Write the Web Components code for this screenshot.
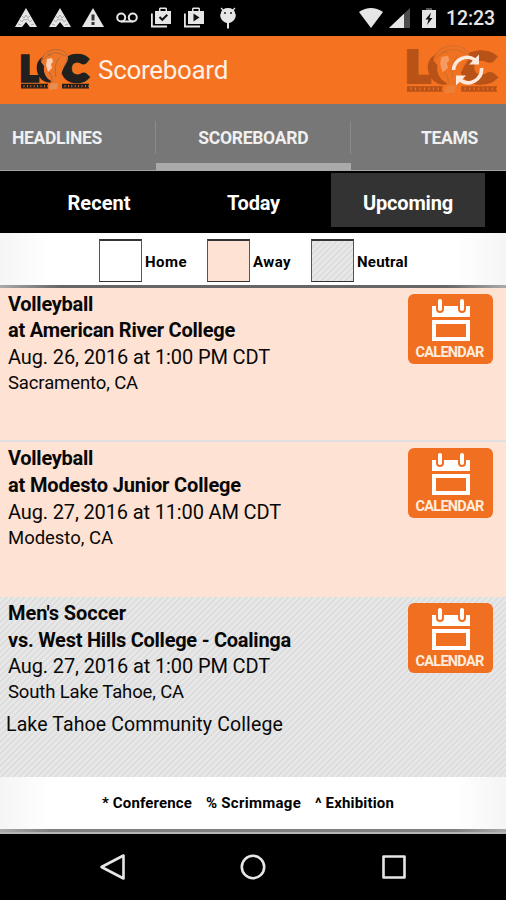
<!DOCTYPE html>
<html lang="en">
<head>
<meta charset="utf-8">
<title>Scoreboard</title>
<style>
html,body{margin:0;background:#000}
body{font-family:Roboto,"Liberation Sans",sans-serif;width:506px;height:900px;overflow:hidden}
</style>
</head>
<body>
<score-app></score-app>
<script>
const define = (name, html, init) => {
  const t = document.createElement('template');
  t.innerHTML = html;
  customElements.define(name, class extends HTMLElement {
    connectedCallback() {
      if (this.shadowRoot) return;
      this.attachShadow({mode: 'open'}).append(t.content.cloneNode(true));
      if (init) init(this, this.shadowRoot);
    }
  });
};

// A line of text tracked to a given width.
define('text-line', `<style>:host{display:block;white-space:nowrap;width:max-content}span{display:inline-block}</style><span><slot></slot></span>`, (el, root) => {
  const span = root.querySelector('span');
  const want = +el.getAttribute('width'), n = el.textContent.length;
  const have = span.getBoundingClientRect().width;
  if (want && have) span.style.letterSpacing = ((want - have) / n) + 'px';
});

define('status-bar', `<style>
:host{display:flex;align-items:center;height:36px;background:#000;color:#e6e6e6;box-sizing:border-box;padding:0 11px 0 15px}
svg{display:block;width:22px;height:22px;fill:currentColor}
.left{display:flex;gap:11.7px;flex:1}
.right{display:flex;align-items:center}
text-line{font-size:19.500px;font-weight:500;line-height:22px;padding-top:2px}
</style>
<div class="left">
<svg viewBox="0 0 22 22"><path d="M11 1L22 20h-7l-4-5-4 5H0z"/><path d="M7 9l2 2 2-3 2 3 2-2M5 13l2 2 2-3 2 1 2-1 2 3 2-2M3 17l3 1m10 0 3-1" fill="none" stroke="#aaa" stroke-width="1"/></svg>
<svg viewBox="0 0 22 22"><path d="M11 1L22 20h-7l-4-5-4 5H0z"/><path d="M7 9l2 2 2-3 2 3 2-2M5 13l2 2 2-3 2 1 2-1 2 3 2-2M3 17l3 1m10 0 3-1" fill="none" stroke="#aaa" stroke-width="1"/></svg>
<svg viewBox="0 0 22 22"><path d="M11 1L22 20H0z"/><path d="M9.500 7.500h3v6h-3zM9.500 15h3v3h-3z" fill="#333"/></svg>
<svg viewBox="0 0 22 22"><g fill="none" stroke="currentColor" stroke-width="2"><circle cx="5.2" cy="10.5" r="4"/><circle cx="16.8" cy="10.5" r="4"/><path d="M5 14.5h12"/></g></svg>
<svg viewBox="0 0 22 22"><path d="M1 6.500h1.800V18.500H17v2H1z"/><path d="M5 4h4V1.500l1-1h6l1 1V4h4v13H5zM10.500 4h5V2h-5z" fill-rule="evenodd"/><path d="M9.500 10l2.800 2.800 5-5" fill="none" stroke="#111" stroke-width="2"/></svg>
<svg viewBox="0 0 22 22"><path d="M1 6.500h1.800V18.500H17v2H1z"/><path d="M5 4h4V1.500l1-1h6l1 1V4h4v13H5zM10.500 4h5V2h-5z" fill-rule="evenodd"/><path d="M10.500 6.500l6 4-6 4z" fill="#111"/></svg>
<svg viewBox="0 0 22 22"><path d="M4 6a7 5 0 0 1 14 0c1 2 1 5-1 7-1.500 2-4 3-5 3v5.500h-2V16c-1 0-3.500-1-5-3-2-2-2-5-1-7z"/><path d="M4 1l3 3M18 1l-3 3M3.500 8h15" stroke="currentColor" stroke-width="1.300"/><circle cx="8" cy="6" r="1" fill="#222"/><circle cx="14" cy="6" r="1" fill="#222"/></svg>
</div>
<div class="right">
<svg style="width:24px;height:20px;margin-right:6px" viewBox="0 0 24 20"><path d="M0 4Q12-4 24 4L12 20z"/></svg>
<svg style="width:21px;height:20px;margin-right:12px" viewBox="0 0 21 20"><path d="M0 20L21 0V20z" fill="#4d4d4d"/><path d="M0 20L15 5.700V20z"/></svg>
<svg style="width:14px;height:20px;margin-right:10px" viewBox="0 0 14 20"><path d="M0 2h14v18H0z"/><path d="M4 0h6v2H4z" fill="#555"/><path d="M9 4.500L3.500 11.500h3L5 17l5.500-7h-3z" fill="#111"/></svg>
<text-line width="49">12:23</text-line>
</div>`);

define('team-logo', `<style>:host{display:block}svg{display:block;width:100%;height:100%;overflow:visible}
text{font-family:Lato,"Liberation Sans",sans-serif;font-weight:900;fill:currentColor;stroke:currentColor}</style>
<svg viewBox="0 0 68 44" preserveAspectRatio="none">
<text x="-1" y="32.500" font-size="35" stroke-width="3.500" textLength="18" lengthAdjust="spacingAndGlyphs">L</text>
<text x="41" y="32.500" font-size="34" stroke-width="4.500" textLength="25" lengthAdjust="spacingAndGlyphs">C</text>
<path d="M30 7C19 7 14.500 14 16 23c2 9 8 12 15 11.500l2-6c-6-3-9-12-3-18z" fill="currentColor"/>
<path d="M24 5c7-5 18-5 22 1 3 5-1 9-3 13-2 5-4 8-4 14l-3 8-8 1 2-9c-5-3-8-8-7-15l-3-4z" fill="#ef7626"/>
<path d="M20 13q3-11 15-11.500Q45 2 46.500 9q-.5 6-4 10" fill="none" stroke="#b0683a" stroke-width=".9"/>
<path d="M26 7q9-5 18 1M22 12q5-6 9-5M28 24q4 4 3 10M39 9q-7 7-4 20" fill="none" stroke="#b0683a" stroke-width=".9"/>
<path d="M26 11l5-1 1 4-2 2 1 4-4 4-2-7z" fill="#fff" opacity=".65"/>
<path d="M29 36l8-1-1 6-8 1z" fill="#e0a070" opacity=".6"/>
<path d="M0 36.300h27M41 36.300h27M0 39.800h27M41 39.800h27" stroke="currentColor" stroke-width="1.200"/>
<path d="M0 38h27M41 38h27" stroke="currentColor" stroke-width="3.400" stroke-dasharray="2.600 .8"/>
</svg>`);

define('app-header', `<style>
:host{display:flex;align-items:center;height:67.500px;background:#f47220;color:#fff0e5;box-sizing:border-box;padding:0 9px 0 21px}
.logo{width:68px;height:44px;color:#221f1f;margin-right:9px}
text-line{font-size:26px;line-height:32px;flex:1}
.refresh{display:grid;width:90px;height:52px}
.refresh>*{grid-area:1/1}
.faded{width:90px;height:52px;color:#732c0a;opacity:.45;align-self:center}
svg{width:33px;height:34px;place-self:center;margin:0 0 0 31px;z-index:1}
</style>
<team-logo class="logo"></team-logo>
<text-line width="130">Scoreboard</text-line>
<div class="refresh"><team-logo class="faded"></team-logo>
<svg viewBox="0 0 33 34"><g fill="none" stroke="#ffe9dc" stroke-width="3.600"><path d="M2.500 17A13.500 13.500 0 0 1 24 7M30.500 15A13.500 13.500 0 0 1 9 27"/></g><path d="M28 1.500v10H18zM5 32.500V22.500h10z" fill="#ffe9dc"/></svg></div>`);

define('tab-strip', `<style>
:host{display:grid;grid-template-columns:155.500px 195.500px 155px;height:67.500px;background:#777;color:#f0f0f0;font-size:17.500px;font-weight:700;line-height:68px;box-sizing:border-box}
.tab{display:flex;border-bottom:1px solid #a5a5a5;overflow:hidden;
background:linear-gradient(#8b8b8b,#8b8b8b) right 17px/1px 33px no-repeat}
.a{padding-left:12px}.b{justify-content:center;border-bottom:8px solid #aaa}.c{padding-left:70px;background:none}
</style>
<div class="tab a"><text-line width="90">HEADLINES</text-line></div>
<div class="tab b"><text-line width="110">SCOREBOARD</text-line></div>
<div class="tab c"><text-line width="57">TEAMS</text-line></div>`);

define('range-picker', `<style>
:host{display:grid;grid-template-columns:repeat(3,154.500px);justify-content:center;height:61.500px;box-sizing:border-box;padding:2px 0 5.500px 1px;background:#000;color:#fff;font-size:20px;font-weight:700}
div{display:flex;justify-content:center;align-items:center;padding-top:5px}
.on{background:#333}
</style>
<div><text-line width="63">Recent</text-line></div>
<div><text-line width="53">Today</text-line></div>
<div class="on"><text-line width="90">Upcoming</text-line></div>`);

define('edge-panel', `<style>
:host{display:flex;box-sizing:border-box;background:linear-gradient(90deg,#f5f5f5,#fff 10%,#fff 90%,#f5f5f5);color:#000;font-weight:700}
</style><slot></slot>`);

define('legend-item', `<style>
:host{display:flex;align-items:center;font-size:15px;line-height:18px}
i{width:41px;height:40px;border:1px solid #555;border-top:2px solid #333;border-bottom-color:#333;margin-right:3px;box-sizing:content-box;background:var(--swatch,#fff)}
text-line{padding-top:2px}
</style><i></i><text-line><slot></slot></text-line>`, (el, root) => {
  const old = root.querySelector('text-line'), line = document.createElement('text-line');
  line.setAttribute('width', el.getAttribute('width'));
  line.textContent = el.textContent;
  old.replaceWith(line);
});

define('calendar-button', `<style>
:host{display:flex;flex-direction:column;align-items:center;width:85px;height:70px;border-radius:6px;background:#f16f20;color:#fff;font-size:14.500px;font-weight:700;line-height:16px}
svg{display:block;width:40px;height:43px;margin-top:5px}
text-line{margin-top:3px;color:#ffecdf;margin-right:2px}
</style>
<svg viewBox="0 0 40 43"><path d="M1 7h38v11H1z" fill="#fff"/><path d="M1 21h38v21H1zM5 25v13h30V25z" fill="#fff" fill-rule="evenodd"/>
<g stroke-linecap="round"><path d="M9 4v6M31 4v6" stroke="#f16f20" stroke-width="8"/><path d="M9 2v8M31 2v8" stroke="#fff" stroke-width="4"/></g></svg>
<text-line width="68">CALENDAR</text-line>`);

define('game-card', `<style>
:host{display:flex;justify-content:space-between;box-sizing:border-box;height:154.700px;padding:3px 13px 0 8px;background:#fee2d3;border-bottom:2px solid #dfdfe2;color:#080808;font-size:20px;line-height:26.800px}
:host([last-away]){border:0}
:host([neutral]){height:180.600px;border:0;background:var(--hatch)}
calendar-button{margin-top:3px}
</style><div><slot></slot></div><calendar-button></calendar-button>`);

define('nav-bar', `<style>
:host{display:flex;height:67px;background:#000;align-items:center;justify-content:center;gap:114.500px}
svg{display:block;width:26px;height:26px;fill:none;stroke:#e6e6e6;stroke-width:2.600;stroke-linejoin:round}
</style>
<svg viewBox="0 0 26 26"><path d="M1.500 13L23.500 1.500V24.500z"/></svg>
<svg viewBox="0 0 26 26"><circle cx="13" cy="13" r="11.200"/></svg>
<svg viewBox="0 0 26 26"><path d="M2.500 2.500h21v21h-21z"/></svg>`);

define('score-app', `<style>
:host{display:flex;flex-direction:column;width:506px;height:900px;background:#fff;
--hatch:repeating-linear-gradient(135deg,#dedede 0 1.600px,#e8e8e8 2.200px 3.600px,#dedede 4.240px)}
:host>*{flex-shrink:0}
.legend{height:52.500px;padding:6.500px 0 0 99px;align-items:flex-start}
.rule{height:2.500px;background:linear-gradient(90deg,#aaa,#666 12%,#666 88%,#aaa)}
.notes{height:51.500px;padding:16px 0 0 102px;font-size:15px;line-height:20px}
.end{height:5px;background:linear-gradient(#0000 0 3px,#b5b5b5 3px),linear-gradient(90deg,#aaa,#808080 10%,#808080 90%,#aaa)}
.b{font-weight:700}.r{font-weight:400}.s{font-size:18.500px;line-height:24px}
.v{font-size:19.500px;margin:8px 0 0 -2px}
</style>
<status-bar></status-bar>
<app-header></app-header>
<tab-strip></tab-strip>
<range-picker></range-picker>
<edge-panel class="legend">
<legend-item width="42" style="width:108px">Home</legend-item>
<legend-item width="38" style="width:104px;--swatch:#fee2d3">Away</legend-item>
<legend-item width="51" style="--swatch:var(--hatch)">Neutral</legend-item>
</edge-panel>
<div class="rule"></div>
<game-card>
<text-line class="b" width="85">Volleyball</text-line>
<text-line class="b" width="227">at American River College</text-line>
<text-line class="r" width="262">Aug. 26, 2016 at 1:00 PM CDT</text-line>
<text-line class="s" width="130">Sacramento, CA</text-line>
</game-card>
<game-card last-away>
<text-line class="b" width="85">Volleyball</text-line>
<text-line class="b" width="233">at Modesto Junior College</text-line>
<text-line class="r" width="273">Aug. 27, 2016 at 11:00 AM CDT</text-line>
<text-line class="s" width="105">Modesto, CA</text-line>
</game-card>
<game-card neutral>
<text-line class="b" width="118">Men's Soccer</text-line>
<text-line class="b" width="283">vs. West Hills College - Coalinga</text-line>
<text-line class="r" width="262">Aug. 27, 2016 at 1:00 PM CDT</text-line>
<text-line class="s" width="176">South Lake Tahoe, CA</text-line>
<text-line class="v" width="277">Lake Tahoe Community College</text-line>
</game-card>
<edge-panel class="notes">
<text-line width="90">* Conference</text-line>
<text-line width="95" style="margin-left:14px">% Scrimmage</text-line>
<text-line width="79" style="margin-left:14px">^ Exhibition</text-line>
</edge-panel>
<div class="end"></div>
<nav-bar></nav-bar>`);
</script>
</body>
</html>
